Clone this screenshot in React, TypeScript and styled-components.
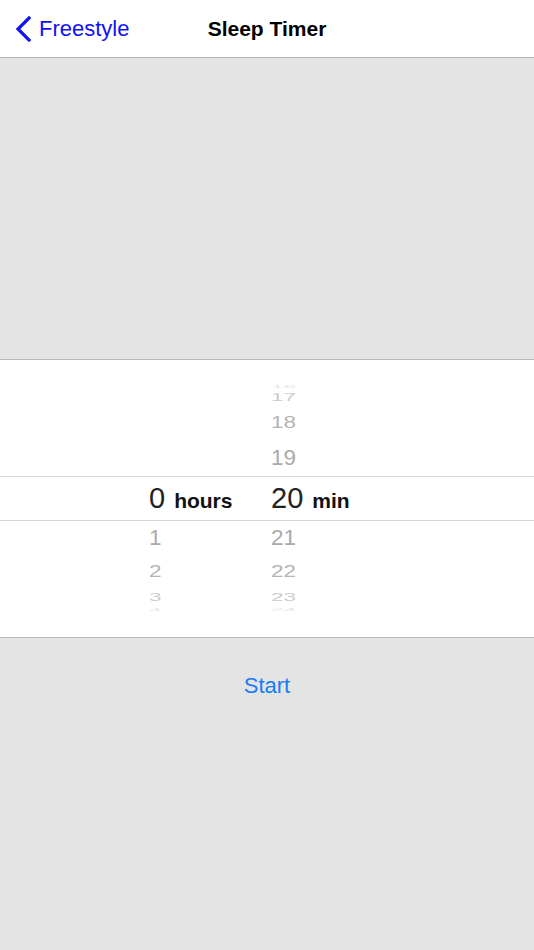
import React from 'react';
import styled, { createGlobalStyle } from 'styled-components';

const GlobalStyle = createGlobalStyle`
  html, body {
    margin: 0;
    padding: 0;
    background: #e4e4e4;
    font-family: "Liberation Sans", Arial, sans-serif;
  }
`;

const Screen = styled.div`
  width: 534px;
  height: 950px;
  display: flex;
  flex-direction: column;
  background: #e4e4e4;
  overflow: hidden;
`;

const NavBar = styled.div`
  height: 57px;
  flex-shrink: 0;
  background: #fff;
  border-bottom: 1px solid #b2b2b2;
  display: grid;
  grid-template-columns: 1fr auto 1fr;
  align-items: center;
`;

const BackButton = styled.button`
  display: flex;
  align-items: center;
  gap: 7px;
  padding: 0 0 0 15px;
  border: none;
  background: none;
  color: #1212f5;
  font-family: inherit;
  font-size: 22px;
  justify-self: start;
  cursor: pointer;
`;

const Title = styled.h1`
  margin: 0;
  font-size: 21px;
  font-weight: bold;
  color: #000;
`;

const Filler = styled.div<{ $height: number }>`
  height: ${(p) => p.$height}px;
  flex-shrink: 0;
`;

const Picker = styled.div`
  height: 277px;
  flex-shrink: 0;
  background: #fff;
  border-top: 1px solid #bababa;
  border-bottom: 1px solid #bababa;
  display: flex;
  flex-direction: column;
  justify-content: center;
`;

const WheelRow = styled.div`
  display: grid;
  grid-template-columns: 122px 114px;
  justify-content: center;
`;

const Column = styled.div<{ $align: 'start' | 'end' }>`
  display: flex;
  flex-direction: column;
  justify-content: ${(p) => (p.$align === 'end' ? 'flex-end' : 'flex-start')};
`;

const Item = styled.div<{ $h: number; $scale: number; $color: string }>`
  height: ${(p) => p.$h}px;
  display: flex;
  align-items: center;
  overflow: visible;
  font-size: 25px;
  color: ${(p) => p.$color};
  line-height: 1;
  span {
    display: inline-block;
    transform: scale(0.9, ${(p) => p.$scale});
    transform-origin: left center;
  }
`;

const Band = styled.div`
  box-sizing: border-box;
  height: 45px;
  border-top: 1px solid #d6d6d6;
  border-bottom: 1px solid #d6d6d6;
  display: grid;
  grid-template-columns: 122px 114px;
  justify-content: center;
  align-items: center;
`;

const Selected = styled.div`
  display: flex;
  align-items: baseline;
  gap: 9px;
`;

const Value = styled.span`
  font-size: 29px;
  font-weight: 300;
  color: #222;
`;

const Unit = styled.span`
  font-size: 21px;
  font-weight: bold;
  color: #111;
`;

const Footer = styled.div`
  display: flex;
  justify-content: center;
  padding-top: 34px;
`;

const StartButton = styled.button`
  border: none;
  background: none;
  color: #157ef7;
  font-family: inherit;
  font-size: 22px;
  cursor: pointer;
`;

type Row = { label: string; h: number; scale: number; color: string };

const upperRows = (labels: string[]): Row[] => {
  const spec = [
    { h: 6, scale: 0.15, color: '#e6e6e6' },
    { h: 17, scale: 0.45, color: '#cccccc' },
    { h: 33, scale: 0.68, color: '#b4b4b4' },
    { h: 37, scale: 0.86, color: '#aaaaaa' },
  ];
  return labels.map((label, i) => ({ label, ...spec[i] }));
};

const lowerRows = (labels: string[]): Row[] => {
  const spec = [
    { h: 32, scale: 0.86, color: '#aaaaaa' },
    { h: 36, scale: 0.68, color: '#b4b4b4' },
    { h: 16, scale: 0.45, color: '#cccccc' },
    { h: 9, scale: 0.15, color: '#e6e6e6' },
  ];
  return labels.map((label, i) => ({ label, ...spec[i] }));
};

const renderRows = (rows: Row[]) =>
  rows.map((r) => (
    <Item key={r.label} $h={r.h} $scale={r.scale} $color={r.color}>
      <span>{r.label}</span>
    </Item>
  ));

const Chevron = () => (
  <svg width="17" height="26" viewBox="0 0 17 26">
    <path d="M14 2 L3 13 L14 24" fill="none" stroke="#1212f5" strokeWidth="3.2" strokeLinecap="square" />
  </svg>
);

const App = () => {
  return (
    <>
      <GlobalStyle />
      <Screen>
        <NavBar>
          <BackButton>
            <Chevron />
            Freestyle
          </BackButton>
          <Title>Sleep Timer</Title>
          <div />
        </NavBar>
        <Filler $height={301} />
        <Picker>
          <WheelRow>
            <Column $align="end">{renderRows(upperRows([]))}</Column>
            <Column $align="end">{renderRows(upperRows(['16', '17', '18', '19']))}</Column>
          </WheelRow>
          <Band>
            <Selected>
              <Value>0</Value>
              <Unit>hours</Unit>
            </Selected>
            <Selected>
              <Value>20</Value>
              <Unit>min</Unit>
            </Selected>
          </Band>
          <WheelRow>
            <Column $align="start">{renderRows(lowerRows(['1', '2', '3', '4']))}</Column>
            <Column $align="start">{renderRows(lowerRows(['21', '22', '23', '24']))}</Column>
          </WheelRow>
        </Picker>
        <Footer>
          <StartButton>Start</StartButton>
        </Footer>
      </Screen>
    </>
  );
};

export default App;
